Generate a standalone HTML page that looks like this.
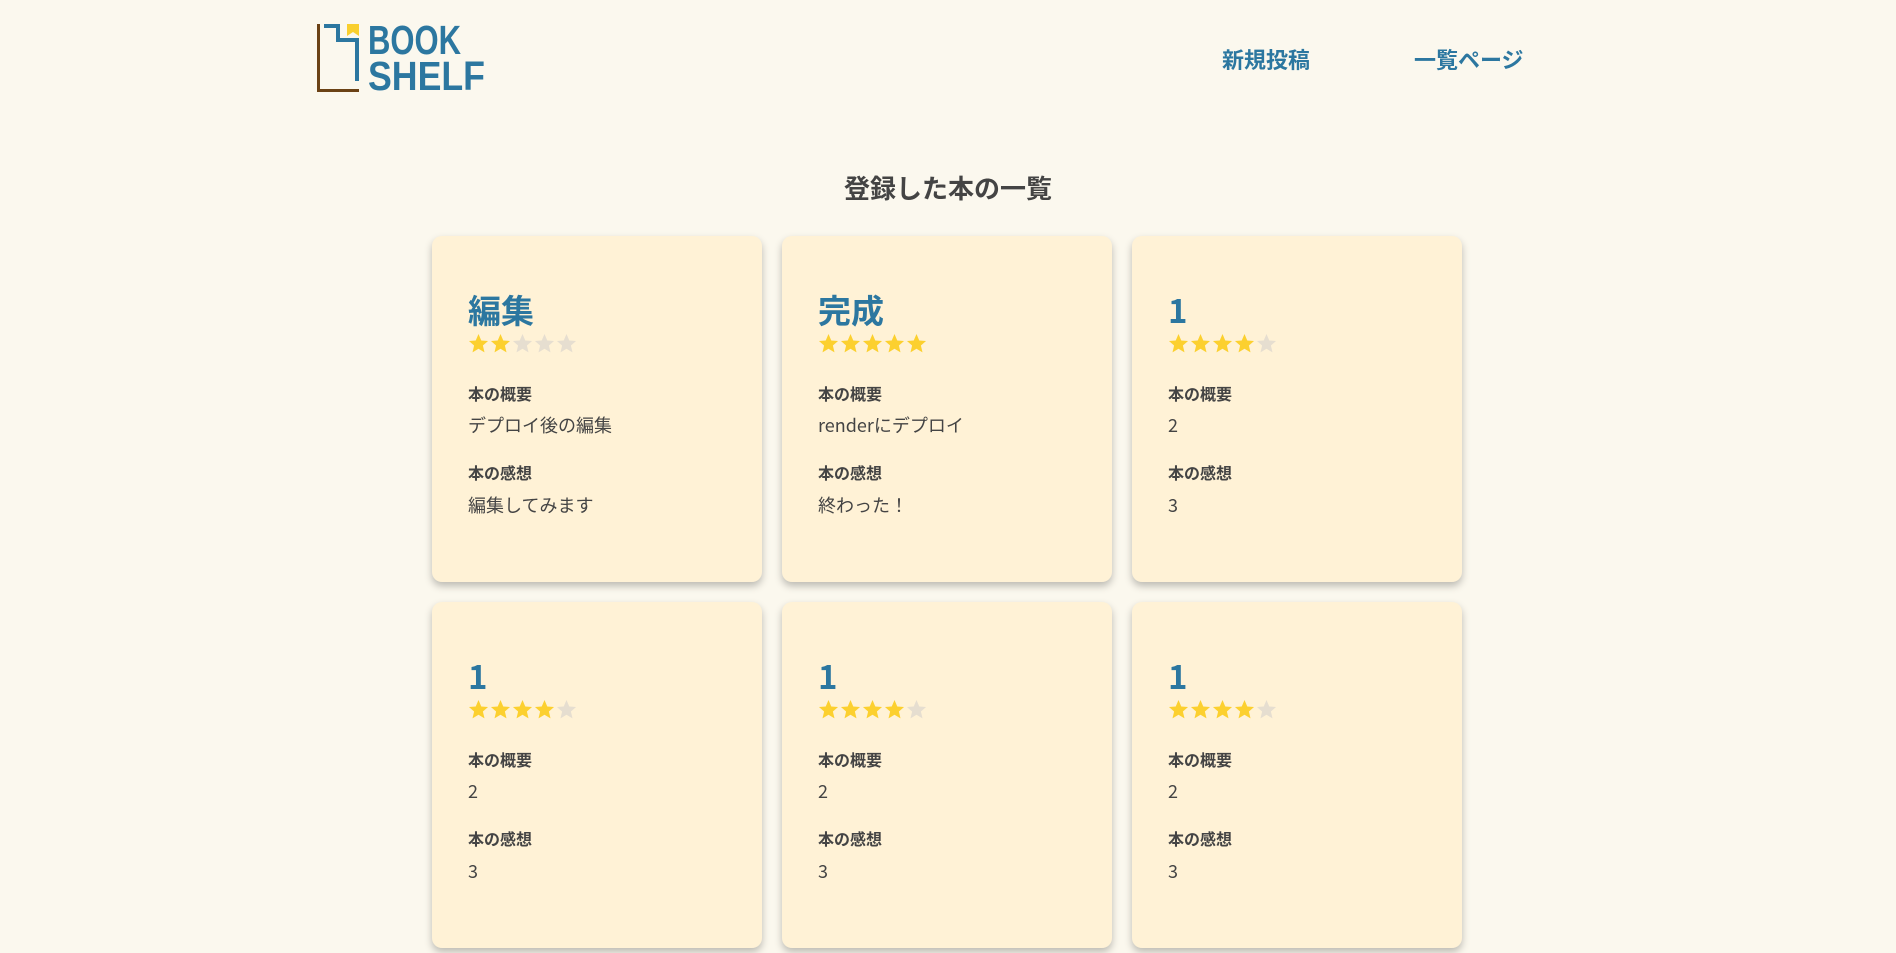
<!DOCTYPE html>
<html><head><meta charset="utf-8"><style>
body{margin:0;width:1896px;height:953px;overflow:hidden;background:#fbf8ee;font-family:"Noto Sans CJK JP","Liberation Sans",sans-serif;color:#444;}
.nav a{position:absolute;top:43px;font-size:22px;font-weight:bold;color:#2c77a0;text-decoration:none;}
h1{position:absolute;top:169px;left:0;width:1896px;text-align:center;margin:0;font-size:26px;font-weight:bold;color:#444;}
.card{position:absolute;width:330px;height:346px;background:#fff2d6;border-radius:10px;box-shadow:0 4px 8px rgba(0,0,0,.25);}
.card .t{position:absolute;left:36px;top:51px;font-size:33px;font-weight:bold;color:#2c77a0;line-height:44px;}
.card .s{position:absolute;left:36px;top:97px;height:22px;display:flex;gap:1px;}
.card .l{position:absolute;left:36px;font-size:16px;font-weight:bold;color:#444;line-height:22px;}
.card .b{position:absolute;left:36px;font-size:18px;color:#444;line-height:26px;}
</style></head><body>
<svg style="position:absolute;left:312px;top:20px" width="180" height="76">
<path d="M6.5 4 V70.5 H47" fill="none" stroke="#6b4215" stroke-width="3"/>
<path d="M12 6 H26 V20 H45 V61" fill="none" stroke="#2c77a0" stroke-width="4"/>
<path d="M35 4 H47 V16 L41 12 L35 16 Z" fill="#f9cf2d"/>
<text x="56" y="34" font-family="Liberation Sans" font-weight="bold" font-size="41" fill="#2c77a0" textLength="93" lengthAdjust="spacingAndGlyphs">BOOK</text>
<text x="56" y="70" font-family="Liberation Sans" font-weight="bold" font-size="41" fill="#2c77a0" textLength="117" lengthAdjust="spacingAndGlyphs">SHELF</text>
</svg>
<div class="nav"><a style="left:1222px">新規投稿</a><a style="left:1414px">一覧ページ</a></div>
<h1>登録した本の一覧</h1>
<svg width="0" height="0" style="position:absolute"><defs><path id="st" d="M11 0.5 L13.9 7.3 L21 7.9 L15.6 12.6 L17.3 19.8 L11 16 L4.7 19.8 L6.4 12.6 L1 7.9 L8.1 7.3 Z"/></defs></svg>
<div id="cards"></div>
<script>
var data=[["編集",2,"デプロイ後の編集","編集してみます"],["完成",5,"renderにデプロイ","終わった！"],["1",4,"2","3"],["1",4,"2","3"],["1",4,"2","3"],["1",4,"2","3"]];
var xs=[432,782,1132],ys=[236,602],h="";
data.forEach(function(d,i){
var s="";for(var k=0;k<5;k++)s+='<svg width="21" height="21" viewBox="0 0 22 21"><use href="#st" fill="'+(k<d[1]?'#fcd02f':'#e6ded0')+'"/></svg>';
h+='<div class="card" style="left:'+xs[i%3]+'px;top:'+ys[Math.floor(i/3)]+'px"><div class="t">'+d[0]+'</div><div class="s">'+s+'</div><div class="l" style="top:146px">本の概要</div><div class="b" style="top:176px">'+d[2]+'</div><div class="l" style="top:225px">本の感想</div><div class="b" style="top:256px">'+d[3]+'</div></div>';});
document.getElementById("cards").innerHTML=h;
</script>
</body></html>
